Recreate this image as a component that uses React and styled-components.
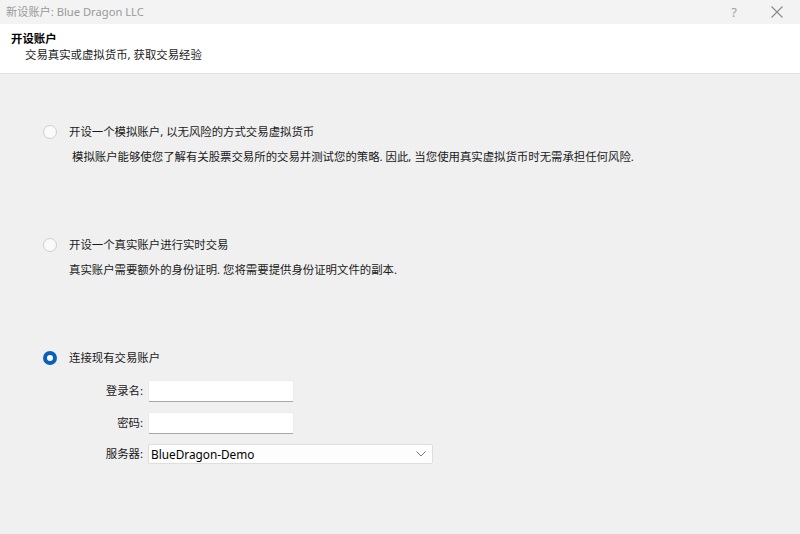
import React from "react";
import styled, { createGlobalStyle } from "styled-components";

const GlobalStyle = createGlobalStyle`
  html, body {
    margin: 0;
    padding: 0;
    background: #f0f0f0;
  }
  * {
    box-sizing: border-box;
  }
`;

const FONT = `"Noto Sans", "Noto Sans CJK SC", sans-serif`;
const SIZE = "11.4px";

const options = [
  {
    id: "demo",
    label: "开设一个模拟账户, 以无风险的方式交易虚拟货币",
    desc: "模拟账户能够使您了解有关股票交易所的交易并测试您的策略. 因此, 当您使用真实虚拟货币时无需承担任何风险.",
    indent: 3,
  },
  {
    id: "real",
    label: "开设一个真实账户进行实时交易",
    desc: "真实账户需要额外的身份证明. 您将需要提供身份证明文件的副本.",
    indent: 0,
  },
];

export default function App() {
  return (
    <>
      <GlobalStyle />
      <Window>
        <TitleBar>
          <Title>新设账户: Blue Dragon LLC</Title>
          <TitleButtons>
            <HelpButton>?</HelpButton>
            <CloseButton>
              <svg width="12" height="12" viewBox="0 0 12 12">
                <path d="M0.5 0.5 L11.5 11.5 M11.5 0.5 L0.5 11.5" stroke="#8a8a8a" strokeWidth="1.1" />
              </svg>
            </CloseButton>
          </TitleButtons>
        </TitleBar>

        <Header>
          <HeaderTitle>开设账户</HeaderTitle>
          <HeaderSub>交易真实或虚拟货币, 获取交易经验</HeaderSub>
        </Header>

        <Content>
          {options.map((opt) => (
            <Option key={opt.id}>
              <RadioRow>
                <Radio />
                <RadioLabel>{opt.label}</RadioLabel>
              </RadioRow>
              <Desc $indent={opt.indent}>{opt.desc}</Desc>
            </Option>
          ))}

          <Option>
            <RadioRow>
              <Radio $checked />
              <RadioLabel>连接现有交易账户</RadioLabel>
            </RadioRow>
            <Form>
              <FieldLabel>登录名:</FieldLabel>
              <TextInput />
              <FieldLabel>密码:</FieldLabel>
              <TextInput />
              <FieldLabel>服务器:</FieldLabel>
              <Select>
                <span>BlueDragon-Demo</span>
                <svg width="10" height="6" viewBox="0 0 10 6">
                  <path d="M0.5 0.5 L5 5 L9.5 0.5" fill="none" stroke="#7a7a7a" strokeWidth="1" />
                </svg>
              </Select>
            </Form>
          </Option>
        </Content>
      </Window>
    </>
  );
}

const Window = styled.div`
  width: 800px;
  height: 534px;
  background: #f0f0f0;
  font-family: ${FONT};
  display: flex;
  flex-direction: column;
  overflow: hidden;
`;

const TitleBar = styled.div`
  height: 24px;
  background: #f3f3f3;
  display: flex;
  align-items: center;
  justify-content: space-between;
  padding-left: 6px;
`;

const Title = styled.div`
  font-size: 11.2px;
  color: #9a9a9a;
  line-height: 20px;
`;

const TitleButtons = styled.div`
  display: flex;
  align-items: center;
  height: 100%;
`;

const HelpButton = styled.div`
  width: 46px;
  padding-left: 6px;
  text-align: center;
  font-size: 13px;
  color: #a0a0a0;
  line-height: 20px;
`;

const CloseButton = styled.div`
  width: 46px;
  display: flex;
  justify-content: center;
  align-items: center;
`;

const Header = styled.div`
  height: 50px;
  background: #ffffff;
  border-bottom: 1px solid #e3e3e3;
  padding: 6px 0 0 11px;
`;

const HeaderTitle = styled.div`
  font-size: ${SIZE};
  font-weight: 700;
  color: #000;
  line-height: 17px;
`;

const HeaderSub = styled.div`
  font-size: ${SIZE};
  color: #1a1a1a;
  line-height: 16px;
  padding-left: 14px;
`;

const Content = styled.div`
  flex: 1;
  padding: 48px 0 0 43px;
  display: flex;
  flex-direction: column;
  gap: 68px;
`;

const Option = styled.div`
  display: flex;
  flex-direction: column;
`;

const RadioRow = styled.div`
  display: flex;
  align-items: center;
  gap: 12px;
  height: 20px;
`;

const Radio = styled.span`
  width: 14px;
  height: 14px;
  border-radius: 50%;
  flex-shrink: 0;
  background: ${(p) => (p.$checked ? "#ffffff" : "#fafafa")};
  border: ${(p) => (p.$checked ? "4px solid #0a5fb8" : "1px solid #cfcfcf")};
`;

const RadioLabel = styled.span`
  font-size: ${SIZE};
  color: #1a1a1a;
  line-height: 20px;
`;

const Desc = styled.div`
  margin-top: 5px;
  padding-left: ${(p) => 26 + p.$indent}px;
  font-size: ${SIZE};
  color: #1a1a1a;
  line-height: 20px;
`;

const Form = styled.div`
  margin-top: 12px;
  margin-left: 26px;
  display: grid;
  grid-template-columns: 74px auto;
  column-gap: 5px;
  row-gap: 10px;
  align-items: center;
  justify-items: start;
`;

const FieldLabel = styled.div`
  justify-self: end;
  font-size: ${SIZE};
  color: #1a1a1a;
  line-height: 20px;
`;

const TextInput = styled.div`
  width: 146px;
  height: 22px;
  background: #ffffff;
  border: 1px solid #ececec;
  border-bottom: 1px solid #a8a8a8;
  border-radius: 2px;
`;

const Select = styled.div`
  width: 285px;
  height: 20px;
  background: #fdfdfd;
  border: 1px solid #dedede;
  border-radius: 2px;
  display: flex;
  align-items: center;
  justify-content: space-between;
  padding: 0 6px 0 2px;
  font-size: 11.8px;
  color: #000;
  line-height: 18px;
`;
